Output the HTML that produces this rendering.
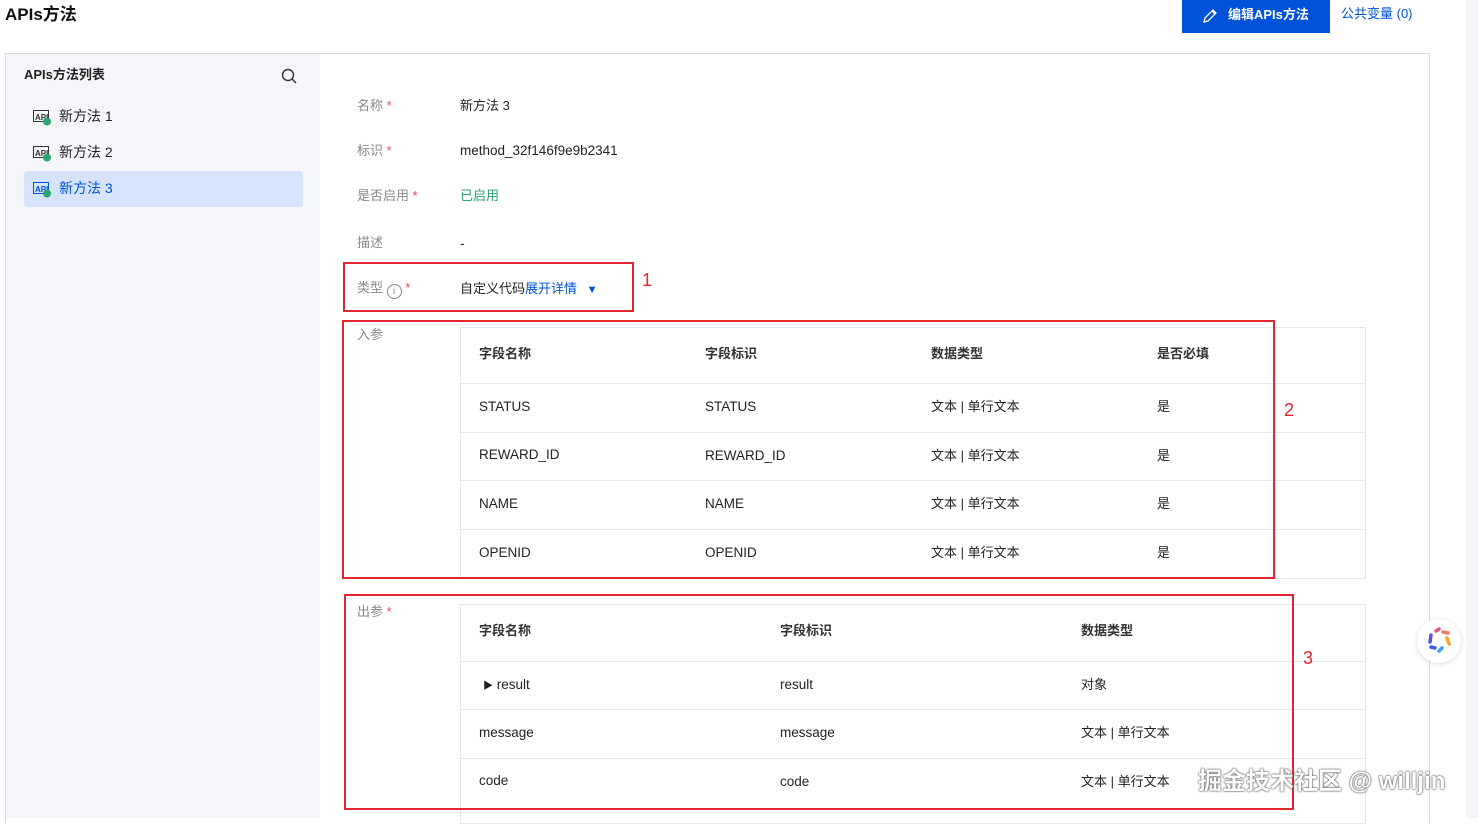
<!DOCTYPE html>
<html><head><meta charset="utf-8"><style>
*{margin:0;padding:0;box-sizing:border-box}
body{width:1478px;height:818px;overflow:hidden;background:#fff;font-family:"Liberation Sans","Noto Sans CJK SC",sans-serif;font-size:14px;line-height:16px;color:#222;position:relative}
.a{position:absolute;white-space:nowrap}
.lbl{color:#888;font-size:13px}
.req{color:#e34d59}
.rb{position:absolute;border:2px solid #e0262f}
.rn{position:absolute;color:#e0262f;font-size:18px;line-height:20px}
.hl{position:absolute;height:1px;background:#e7e7e7}
.n{font-size:13.5px}
</style></head><body>
<div class="a" style="left:5px;top:5px;font-size:17px;line-height:20px;font-weight:bold;color:#111">APIs方法</div>
<div class="a" style="left:1182px;top:0;width:148px;height:33px;background:#0052d9;color:#fff;font-size:13px;line-height:30px;padding-left:46px;font-weight:bold">编辑APIs方法</div>
<svg class="a" style="left:1202px;top:8px" width="16" height="16" viewBox="0 0 16 16"><path d="M2 14l1-4 8-8 3 3-8 8z M10 3l3 3" fill="none" stroke="#fff" stroke-width="1.3"/></svg>
<div class="a" style="left:1341px;top:6px;color:#0052d9;font-size:13px">公共变量 (0)</div>
<div class="a" style="left:1466px;top:0;width:12px;height:818px;background:#f3f4f8"></div>
<div class="a" style="left:5px;top:53px;width:1425px;height:770px;border:1px solid #dcdcdc;border-bottom:none"></div>
<div class="a" style="left:6px;top:54px;width:314px;height:764px;background:#f5f6f9"></div>
<div class="a" style="left:24px;top:67px;font-size:13px;font-weight:bold">APIs方法列表</div>
<svg class="a" style="left:281px;top:68px" width="16" height="16" viewBox="0 0 16 16"><circle cx="7" cy="7" r="5.5" fill="none" stroke="#333" stroke-width="1.4"/><path d="M11 11l4 4" stroke="#333" stroke-width="1.4"/></svg>
<div class="a" style="left:24px;top:171px;width:279px;height:36px;background:#d6e4fb;border-radius:3px"></div>
<div class="a" style="left:59px;top:108px;font-size:14px">新方法 1</div>
<div class="a" style="left:59px;top:144px;font-size:14px">新方法 2</div>
<div class="a" style="left:59px;top:180px;font-size:14px;color:#0052d9">新方法 3</div>
<svg class="a" style="left:33px;top:109px" width="20" height="17"><rect x="0.5" y="1.5" width="15" height="11" fill="none" stroke="#333"/><text x="2" y="11" font-size="8" font-family="Liberation Sans" font-weight="bold" fill="#333">API</text><circle cx="14" cy="12.5" r="4" fill="#2ba471"/></svg>
<svg class="a" style="left:33px;top:145px" width="20" height="17"><rect x="0.5" y="1.5" width="15" height="11" fill="none" stroke="#333"/><text x="2" y="11" font-size="8" font-family="Liberation Sans" font-weight="bold" fill="#333">API</text><circle cx="14" cy="12.5" r="4" fill="#2ba471"/></svg>
<svg class="a" style="left:33px;top:181px" width="20" height="17"><rect x="0.5" y="1.5" width="15" height="11" fill="none" stroke="#0052d9"/><text x="2" y="11" font-size="8" font-family="Liberation Sans" font-weight="bold" fill="#0052d9">API</text><circle cx="14" cy="12.5" r="4" fill="#2ba471"/></svg>

<div class="a lbl" style="left:357px;top:98px">名称 <span class="req">*</span></div>
<div class="a" style="left:460px;top:98px;font-size:13px">新方法 3</div>
<div class="a lbl" style="left:357px;top:143px">标识 <span class="req">*</span></div>
<div class="a n" style="left:460px;top:143px">method_32f146f9e9b2341</div>
<div class="a lbl" style="left:357px;top:188px">是否启用 <span class="req">*</span></div>
<div class="a" style="left:460px;top:188px;font-size:13px;color:#2ba471">已启用</div>
<div class="a lbl" style="left:357px;top:235px">描述</div>
<div class="a" style="left:460px;top:235px">-</div>
<div class="a lbl" style="left:357px;top:280px">类型 <span style="display:inline-block;width:15px;height:15px;border:1px solid #888;border-radius:50%;font-size:10px;text-align:center;line-height:13px;vertical-align:-2px">i</span> <span class="req">*</span></div>
<div class="a" style="left:460px;top:281px;font-size:13px">自定义代码<span style="color:#0052d9">展开详情</span> <span style="color:#0052d9;font-size:11px;margin-left:6px">▼</span></div>

<div class="a lbl" style="left:357px;top:327px">入参</div>
<div class="a" style="left:460px;top:327px;width:906px;height:252px;border:1px solid #e7e7e7"></div>
<div class="hl" style="left:460px;top:383px;width:906px"></div>
<div class="hl" style="left:460px;top:432px;width:906px"></div>
<div class="hl" style="left:460px;top:480px;width:906px"></div>
<div class="hl" style="left:460px;top:529px;width:906px"></div>
<div class="a" style="left:479px;top:346px;font-size:13px;font-weight:bold;color:#333">字段名称</div>
<div class="a" style="left:705px;top:346px;font-size:13px;font-weight:bold;color:#333">字段标识</div>
<div class="a" style="left:931px;top:346px;font-size:13px;font-weight:bold;color:#333">数据类型</div>
<div class="a" style="left:1157px;top:346px;font-size:13px;font-weight:bold;color:#333">是否必填</div>
<div class="a n" style="left:479px;top:399px">STATUS</div><div class="a n" style="left:705px;top:399px">STATUS</div><div class="a" style="left:931px;top:399px;font-size:13px">文本 | 单行文本</div><div class="a" style="left:1157px;top:399px;font-size:13px">是</div>
<div class="a n" style="left:479px;top:447px">REWARD_ID</div><div class="a n" style="left:705px;top:448px">REWARD_ID</div><div class="a" style="left:931px;top:448px;font-size:13px">文本 | 单行文本</div><div class="a" style="left:1157px;top:448px;font-size:13px">是</div>
<div class="a n" style="left:479px;top:496px">NAME</div><div class="a n" style="left:705px;top:496px">NAME</div><div class="a" style="left:931px;top:496px;font-size:13px">文本 | 单行文本</div><div class="a" style="left:1157px;top:496px;font-size:13px">是</div>
<div class="a n" style="left:479px;top:545px">OPENID</div><div class="a n" style="left:705px;top:545px">OPENID</div><div class="a" style="left:931px;top:545px;font-size:13px">文本 | 单行文本</div><div class="a" style="left:1157px;top:545px;font-size:13px">是</div>

<div class="a lbl" style="left:357px;top:604px">出参 <span class="req">*</span></div>
<div class="a" style="left:460px;top:604px;width:906px;height:220px;border:1px solid #e7e7e7"></div>
<div class="hl" style="left:460px;top:661px;width:906px"></div>
<div class="hl" style="left:460px;top:709px;width:906px"></div>
<div class="hl" style="left:460px;top:758px;width:906px"></div>
<div class="a" style="left:479px;top:623px;font-size:13px;font-weight:bold;color:#333">字段名称</div>
<div class="a" style="left:780px;top:623px;font-size:13px;font-weight:bold;color:#333">字段标识</div>
<div class="a" style="left:1081px;top:623px;font-size:13px;font-weight:bold;color:#333">数据类型</div>
<div class="a n" style="left:483px;top:677px"><span style="font-size:10px">▶</span> result</div><div class="a n" style="left:780px;top:677px">result</div><div class="a" style="left:1081px;top:677px;font-size:13px">对象</div>
<div class="a n" style="left:479px;top:725px">message</div><div class="a n" style="left:780px;top:725px">message</div><div class="a" style="left:1081px;top:725px;font-size:13px">文本 | 单行文本</div>
<div class="a n" style="left:479px;top:773px">code</div><div class="a n" style="left:780px;top:774px">code</div><div class="a" style="left:1081px;top:774px;font-size:13px">文本 | 单行文本</div>

<div class="rb" style="left:343px;top:262px;width:291px;height:50px"></div>
<div class="rb" style="left:342px;top:320px;width:933px;height:259px"></div>
<div class="rb" style="left:344px;top:594px;width:950px;height:216px"></div>
<div class="rn" style="left:642px;top:270px">1</div>
<div class="rn" style="left:1284px;top:400px">2</div>
<div class="rn" style="left:1303px;top:648px">3</div>

<div class="a" style="left:1417px;top:619px;width:44px;height:44px;border-radius:50%;background:#fff;box-shadow:0 1px 6px rgba(0,0,0,.15)"></div>
<svg class="a" style="left:1424px;top:626px" width="30" height="30" viewBox="0 0 30 30" stroke-linecap="round" stroke-width="3.5" fill="none"><path d="M7 9l-1 7" stroke="#5b50e8"/><path d="M12 5l3-2" stroke="#e9548f"/><path d="M19 6l5 1" stroke="#f17b5f"/><path d="M23 12l2 6" stroke="#f5a623"/><path d="M18 22l-3 3" stroke="#3ea3f0"/><path d="M7 21l4 1" stroke="#3b5de8"/></svg>
<div class="a" style="left:1198px;top:768px;font-size:24px;line-height:28px;color:#fff;font-weight:bold;text-shadow:0 0 2px #444,0 0 1px #222">掘金技术社区 @ willjin</div>
</body></html>
